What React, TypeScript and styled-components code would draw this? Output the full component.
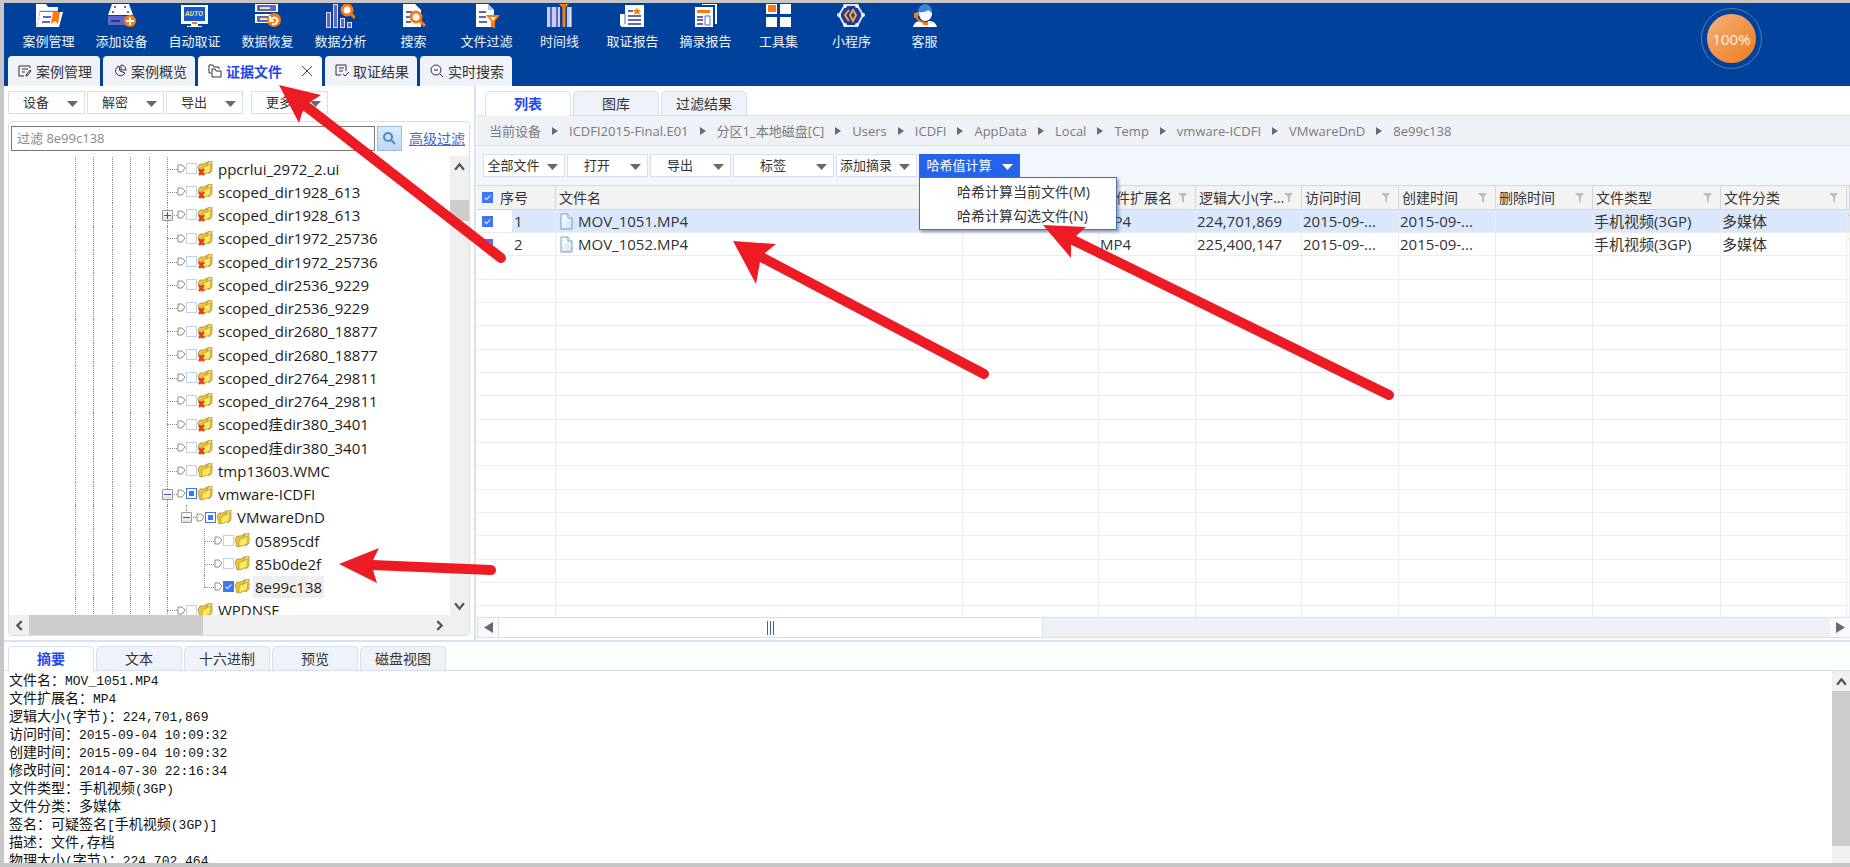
import React from "react";
import styled, { createGlobalStyle, css } from "styled-components";

const UI = `"Open Sans", "Noto Sans CJK SC", sans-serif`;
const LINE = "#d6dff0";
const BLUE = "#00419c";
const ACCENT = "#2563eb";

const GlobalStyle = createGlobalStyle`
  *, *::before, *::after { box-sizing: border-box; }
  html, body { margin: 0; }
  body { font-family: ${UI}; font-size: 13px; color: #333; background: #fff; }
  button, input { font: inherit; color: inherit; }
  ul { list-style: none; margin: 0; padding: 0; }
`;

const Window = styled.div`
  position: relative;
  display: flex;
  flex-direction: column;
  height: 100vh;
  overflow: hidden;
  border: solid #c6c6c6;
  border-width: 3px 0 4px 4px;
`;

/* ---------- header ---------- */

const Header = styled.header`
  position: relative;
  flex: none;
  background: ${BLUE};
`;

const Launcher = styled.nav`
  display: flex;
  height: 53px;
  padding-left: 8px;
`;

const LaunchButton = styled.button`
  display: flex;
  flex-direction: column;
  align-items: center;
  gap: 3px;
  width: 73px;
  padding: 1px 0 0;
  border: 0;
  background: none;
  color: #eef3fb;
  line-height: 20px;
  white-space: nowrap;
`;

const PageTabs = styled.div`
  display: flex;
  gap: 3px;
  height: 30px;
  padding-left: 4px;
`;

const PageTab = styled.button<{ $active?: boolean }>`
  display: flex;
  align-items: center;
  gap: 4px;
  width: ${(p) => (p.$active ? 124 : 92)}px;
  padding: 0 10px;
  border: 0;
  border-radius: 4px 4px 0 0;
  background: ${(p) => (p.$active ? "#fff" : "#eff2f8")};
  color: ${(p) => (p.$active ? "#1f48f0" : "#333")};
  font-size: 14px;
  font-weight: ${(p) => (p.$active ? 700 : 400)};
  white-space: nowrap;
  svg { flex: none; color: #333; }
  svg:last-child:not(:first-child) { margin-left: auto; }
`;

const ProgressBadge = styled.div`
  position: absolute;
  top: 5px;
  right: 88px;
  width: 61px;
  height: 61px;
  padding: 5px;
  border: 1px solid #5f7ba6;
  border-radius: 50%;
  span {
    display: flex;
    align-items: center;
    justify-content: center;
    height: 100%;
    border-radius: 50%;
    background: linear-gradient(135deg, #f6b27a, #ec7a1c);
    color: #fff3e6;
    font-size: 15px;
  }
`;

/* ---------- shared controls ---------- */

const MenuButtonRoot = styled.button<{ $width: number; $open?: boolean }>`
  display: flex;
  align-items: center;
  flex: none;
  width: ${(p) => p.$width}px;
  height: 23px;
  padding: 0 6px 0 0;
  border: 1px solid ${(p) => (p.$open ? ACCENT : LINE)};
  background: ${(p) => (p.$open ? ACCENT : "#fff")};
  color: ${(p) => (p.$open ? "#fff" : "#333")};
  line-height: 20px;
  white-space: nowrap;
  span { flex: 1; padding-bottom: 2px; text-align: center; }
  svg { flex: none; margin: 3px 0 0 4px; color: ${(p) => (p.$open ? "#fff" : "#6a6a6a")}; }
`;

function MenuButton({ label, width, open }: { label: string; width: number; open?: boolean }) {
  return (
    <MenuButtonRoot $width={width} $open={open} aria-haspopup="menu" aria-expanded={!!open}>
      <span>{label}</span>
      <svg width="11" height="6" viewBox="0 0 11 6"><path d="M0 0h11L5.500 6z" fill="currentColor" /></svg>
    </MenuButtonRoot>
  );
}

const CardTabs = styled.div<{ $indent: number }>`
  display: flex;
  flex: none;
  gap: 2px;
  height: 25px;
  padding-left: ${(p) => p.$indent}px;
  border-bottom: 1px solid ${LINE};
`;

const CardTab = styled.button<{ $active?: boolean }>`
  width: 86px;
  height: ${(p) => (p.$active ? 25 : 24)}px;
  padding: 0;
  border: 1px solid ${LINE};
  border-bottom: 0;
  border-radius: 5px 5px 0 0;
  background: ${(p) => (p.$active ? "#fff" : "#eff2f8")};
  color: ${(p) => (p.$active ? "#1f48f0" : "#333")};
  font-size: 14px;
  font-weight: ${(p) => (p.$active ? 700 : 400)};
  line-height: 20px;
`;

const tick = css`
  background: #3f76f5;
  border-color: #3f76f5;
  &::after {
    content: "";
    position: absolute;
    left: 3px;
    top: 1px;
    width: 3px;
    height: 6px;
    border: solid #fff;
    border-width: 0 1px 1px 0;
    transform: rotate(45deg);
  }
`;

const partial = css`
  border-color: #3f76f5;
  border-width: 1px;
  box-shadow: inset 0 0 0 2px #fff, inset 0 0 0 6px #3f76f5;
`;

const Check = styled.input<{ $partial?: boolean }>`
  appearance: none;
  position: relative;
  flex: none;
  width: 11px;
  height: 11px;
  margin: 0;
  border: 1px solid #bcd0f8;
  background: #fff;
  &:checked { ${tick} }
  ${(p) => p.$partial && partial}
`;

/* ---------- left panel ---------- */

const Main = styled.main`
  display: flex;
  flex: 1;
  min-height: 0;
  border-bottom: 2px solid #d7e2f5;
`;

const Side = styled.aside`
  display: flex;
  flex-direction: column;
  flex: none;
  width: 472px;
  padding: 5px 4px 4px;
  border-right: 2px solid #d7e2f5;
`;

const SideTools = styled.div`
  display: flex;
  gap: 2px;
  margin-bottom: 7px;
  > :last-child { margin-left: 6px; }
`;

const TreeBox = styled.section`
  display: flex;
  flex-direction: column;
  flex: 1;
  min-height: 0;
  border: 1px solid ${LINE};
  border-radius: 4px;
`;

const FilterRow = styled.form`
  display: flex;
  align-items: center;
  gap: 2px;
  padding: 4px 4px 5px 2px;
  a { margin-left: 5px; font-size: 14px; line-height: 20px; color: #3a6ad8; white-space: nowrap; }
`;

const FilterInput = styled.input`
  flex: 1;
  min-width: 0;
  height: 25px;
  padding: 0 5px 2px;
  border: 1px solid #777;
  background: #fff;
  color: #333;
  &::placeholder { color: #888; opacity: 1; }
`;

const SearchButton = styled.button`
  display: flex;
  align-items: center;
  justify-content: center;
  width: 25px;
  height: 25px;
  padding: 0;
  border: 1px solid #9dbce2;
  background: linear-gradient(#dceafc, #bfd8f7);
`;

const TreeScroll = styled.div`
  display: flex;
  flex: 1;
  min-height: 0;
`;

const Tree = styled.ul`
  flex: 1;
  min-width: 0;
  overflow: hidden;
  padding: 1px 0 0 66px;
`;

const TreeRow = styled.li`
  display: flex;
  align-items: center;
  height: 23px;
  font-size: 15px;
  line-height: 22px;
  color: #1c1c1c;
  white-space: nowrap;
  &:nth-child(4n) { height: 24px; }
`;

const Guide = styled.span<{ $line?: boolean }>`
  flex: none;
  align-self: stretch;
  width: 18px;
  border-left: 1px ${(p) => (p.$line === false ? "none" : "dotted")} #8c8c8c;
  &:nth-child(even) { width: 19px; }
`;

const Branch = styled.span<{ $last?: boolean }>`
  position: relative;
  flex: none;
  align-self: stretch;
  width: 10px;
  &::before {
    content: "";
    position: absolute;
    left: 0;
    top: 0;
    height: ${(p) => (p.$last ? "50%" : "100%")};
    border-left: 1px dotted #8c8c8c;
  }
  &::after {
    content: "";
    position: absolute;
    left: 0;
    right: 0;
    top: 50%;
    border-top: 1px dotted #8c8c8c;
  }
`;

const Expander = styled.button`
  position: absolute;
  z-index: 1;
  left: -5px;
  top: calc(50% - 5px);
  width: 11px;
  height: 11px;
  padding: 0;
  border: 1px solid #999;
  border-radius: 1px;
  background: linear-gradient(#fff, #e2e2e2);
  svg { display: block; }
`;

const NodeLabel = styled.label<{ $selected?: boolean }>`
  margin-left: 3px;
  padding: 0 2px;
  background: ${(p) => (p.$selected ? "#efefef" : "none")};
`;

const VBar = styled.div<{ $width: number }>`
  display: flex;
  flex-direction: column;
  align-items: center;
  flex: none;
  width: ${(p) => p.$width}px;
  background: #f0f0f0;
`;

const HBar = styled.div`
  display: flex;
  flex: none;
  align-items: center;
  height: 20px;
  background: #f0f0f0;
`;

const BarButton = styled.button`
  display: flex;
  align-items: center;
  justify-content: center;
  flex: none;
  width: 20px;
  height: 20px;
  padding: 0;
  border: 0;
  background: none;
  color: #555;
`;

const Thumb = styled.div<{ $w?: number; $h?: number; $offset?: number }>`
  flex: none;
  width: ${(p) => (p.$w ? p.$w + "px" : "100%")};
  height: ${(p) => (p.$h ? p.$h + "px" : "100%")};
  margin-top: ${(p) => p.$offset ?? 0}px;
  background: #cdcdcd;
`;

const Spacer = styled.span`
  flex: 1;
`;

/* ---------- right panel ---------- */

const Content = styled.section`
  display: flex;
  flex-direction: column;
  flex: 1;
  min-width: 0;
  margin-left: 1px;
  padding-top: 5px;
`;

const Crumbs = styled.nav`
  display: flex;
  align-items: center;
  flex: none;
  gap: 11px;
  height: 30px;
  padding-left: 12px;
  border-bottom: 1px solid ${LINE};
  background: #eef1f6;
  line-height: 20px;
  white-space: nowrap;
  a { color: #7a7a7a; text-decoration: none; }
  svg { flex: none; }
`;

const ContentTools = styled.div`
  display: flex;
  flex: none;
  gap: 2px;
  height: 39px;
  padding: 8px 6px;
  background: #f3f6fc;
`;

const MenuAnchor = styled.div`
  position: relative;
`;

const Menu = styled.ul`
  position: absolute;
  z-index: 3;
  top: 23px;
  left: 0;
  width: 198px;
  padding: 2px 0 1px;
  border: 1px solid #4a70b5;
  background: #fff;
  box-shadow: 2px 2px 3px rgba(60, 80, 130, 0.5);
`;

const MenuItem = styled.button`
  display: block;
  width: 100%;
  height: 24px;
  padding: 0 0 0 37px;
  border: 0;
  background: none;
  font-size: 14px;
  line-height: 24px;
  text-align: left;
  white-space: nowrap;
`;

const TableScroll = styled.div`
  flex: 1;
  min-height: 0;
  overflow: hidden;
`;

const Table = styled.table`
  width: 100%;
  table-layout: fixed;
  border-spacing: 0;
  line-height: 20px;
`;

const Th = styled.th`
  height: 25px;
  padding: 0 8px 0 3px;
  border: solid #d3d6de;
  border-width: 1px 1px 1px 0;
  background: #f3f3f3;
  font-size: 14px;
  font-weight: 400;
  text-align: left;
  white-space: nowrap;
  overflow: hidden;
  &:first-child { padding-left: 5px; }
  > div { display: flex; align-items: center; justify-content: space-between; height: 23px; }
`;

const Row = styled.tr<{ $selected?: boolean }>`
  height: 23px;
  &:nth-child(3n) { height: 24px; }
  td {
    padding: 0 1px;
    border: solid #ededf0;
    border-width: 0 1px 1px 0;
    background: ${(p) => (p.$selected ? "#d9e8fd" : "#fff")};
    font-size: 15px;
    white-space: nowrap;
    overflow: hidden;
  }
  td:first-child {
    padding-left: 5px;
    background: ${(p) => (p.$selected ? "linear-gradient(90deg, #fff 35px, #d9e8fd 35px)" : "#fff")};
  }
`;

const IndexCell = styled.div<{ $gap: number }>`
  display: flex;
  align-items: center;
  gap: ${(p) => p.$gap}px;
`;

const FileCell = styled.div`
  display: flex;
  align-items: center;
  gap: 5px;
  padding-left: 3px;
`;

const GridBar = styled.div`
  display: flex;
  flex: none;
  height: 21px;
  margin-bottom: 2px;
  border: solid ${LINE};
  border-width: 1px 0 1px 1px;
  background: #eef1f7;
`;

const GridBarButton = styled(BarButton)`
  height: 19px;
  background: #f7f9fc;
  color: #666;
`;

const GridThumb = styled.div`
  display: flex;
  align-items: center;
  justify-content: center;
  gap: 2px;
  width: 545px;
  border: solid ${LINE};
  border-width: 0 1px;
  background: #fff;
  i { width: 1px; height: 14px; background: #2f66a8; }
`;

/* ---------- bottom panel ---------- */

const Details = styled.section`
  display: flex;
  flex-direction: column;
  flex: none;
  height: 221px;
  padding-top: 4px;
`;

const DetailBody = styled.div`
  display: flex;
  flex: 1;
  min-height: 0;
`;

const DetailText = styled.div`
  flex: 1;
  overflow: hidden;
  padding-left: 5px;
  color: #111;
  p { margin: 0; height: 18px; line-height: 18px; font-size: 14px; white-space: nowrap; }
`;

const Mono = styled.span`
  font-family: "Liberation Mono", monospace;
  font-size: 13px;
  white-space: pre;
`;

const Annotations = styled.svg`
  position: absolute;
  z-index: 5;
  top: -3px;
  left: -4px;
  pointer-events: none;
`;

/* ---------- drawings ---------- */

const W = "#fff";
const P = "#5c66c9";
const O = "#fb7a0c";

const launchers: { label: string; art: React.ReactNode }[] = [
  {
    label: "案例管理",
    art: (
      <>
        <path d="M2 0h10l2 3h10v4H6L3 23H2z" fill={W} />
        <path d="M6 8h23l-4 15H3z" fill={W} />
        <path d="M5 7h19" stroke="#c4c9ee" />
        <path d="M9 13h8M8 18h8" stroke={P} strokeWidth="2" />
        <path d="M19 8h7l-2 12-3-3-4 3z" fill={O} />
      </>
    ),
  },
  {
    label: "添加设备",
    art: (
      <>
        <path d="M5 0h17l4 11H1z" fill={W} />
        <path d="M7 3h2M17 3h2M5 8h2M20 8h2" stroke={P} strokeWidth="2" />
        <path d="M1 12h25v9H1z" fill={P} />
        <path d="M4 17h9" stroke="#2b3590" strokeWidth="2" />
        <circle cx="23" cy="17" r="6" fill={O} />
        <path d="M19 17h8M23 13v8" stroke={W} strokeWidth="2" />
      </>
    ),
  },
  {
    label: "自动取证",
    art: (
      <>
        <path d="M1 1h27v19H1z" fill={W} />
        <path d="M4 3h21v14H4z" fill="#1657d8" />
        <text x="14" y="12" textAnchor="middle" fontSize="7" fontWeight="700" fontStyle="italic" fill="#e8e23a">AUTO</text>
        <path d="M12 18h5v2h-5z" fill={O} />
        <path d="M11 20h7v2h4v1H7v-1h4z" fill={W} />
      </>
    ),
  },
  {
    label: "数据恢复",
    art: (
      <>
        <path d="M2 0h23v8H2zM2 10h23v9H2z" fill={W} />
        <path d="M4 1h19v6H4zM4 12h19v6H4z" fill={P} />
        <path d="M7 4h10M7 15h8" stroke="#f3ea8b" strokeWidth="2" />
        <circle cx="21" cy="16" r="7" fill={O} />
        <path d="M19 20c5 1 7-4 4-6-2-1-4 0-5 2m-1-4v5h4" fill="none" stroke={W} strokeWidth="2" />
      </>
    ),
  },
  {
    label: "数据分析",
    art: (
      <>
        <path d="M0 8h5v16H0zM7 0h5v24H7zM14 14h5v10h-5zM21 18h5v6h-5z" fill="#dfe1fa" />
        <path d="M1 9h3v14H1zM8 1h3v22H8zM15 15h3v8h-3zM22 19h3v4h-3z" fill={P} />
        <circle cx="21" cy="6" r="5" fill={W} stroke={O} strokeWidth="3" />
        <path d="M25 10l4 4" stroke={O} strokeWidth="3" />
      </>
    ),
  },
  {
    label: "搜索",
    art: (
      <>
        <path d="M4 0h12l6 6v17H4z" fill={W} />
        <path d="M7 8h6M7 13h5M7 18h5" stroke={P} strokeWidth="2" />
        <circle cx="17" cy="13" r="5" fill={W} stroke={O} strokeWidth="3" />
        <path d="M21 17l5 5" stroke={O} strokeWidth="3" />
      </>
    ),
  },
  {
    label: "文件过滤",
    art: (
      <>
        <path d="M4 0h12l6 6v17H4z" fill={W} />
        <path d="M16 0v6h6" fill="#b9bfee" />
        <path d="M7 8h7M7 13h7M7 18h8" stroke={P} strokeWidth="2" />
        <path d="M16 12h10l-4 5v6l-2-1v-5z" fill={W} stroke={O} strokeWidth="2" />
      </>
    ),
  },
  {
    label: "时间线",
    art: (
      <>
        <path d="M2 3h3v20H2zM7 3h4v20H7zM13 3h2v20h-2zM22 3h4v20h-4z" fill="#c9cdf3" />
        <path d="M5 3h2v20H5zM11 3h2v20h-2z" fill="#5c66c9" />
        <path d="M26 3v20" stroke={W} />
        <path d="M14 0h10l-5 5z" fill={O} />
        <path d="M19 4v19" stroke={O} strokeWidth="3" />
      </>
    ),
  },
  {
    label: "取证报告",
    art: (
      <>
        <path d="M7 1h19v22H5c-2 0-3-1-3-3V10h5z" fill={W} />
        <path d="M7 10v10" stroke={P} />
        <path d="M10 7h5M10 12h13M10 16h13M10 20h13" stroke={P} strokeWidth="2" />
        <path d="M19 3l1 3h3l-2 2 1 3-3-2-3 2 1-3-2-2h3z" fill={O} />
      </>
    ),
  },
  {
    label: "摘录报告",
    art: (
      <>
        <path d="M11 0h14v20" fill="none" stroke={W} strokeWidth="2" />
        <path d="M4 3h18v20H4z" fill={W} />
        <path d="M6 6h13v3H6z" fill={O} />
        <path d="M6 13h6M6 16h6M6 20h6" stroke={P} strokeWidth="2" />
        <path d="M14 12h5v9h-5z" fill="none" stroke={P} />
      </>
    ),
  },
  {
    label: "工具集",
    art: (
      <>
        <path d="M2 0h11v10H2zM16 0h11v10H16zM2 13h11v10H2zM16 13h11v10H16z" fill={W} />
        <path d="M4 1h8v7H4z" fill={O} />
      </>
    ),
  },
  {
    label: "小程序",
    art: (
      <>
        <path d="M8 1h12l6 10-6 11H8L2 11z" fill="#2733a8" stroke="#cfeaf6" strokeWidth="2" />
        <g fill="#e9fbff">
          <circle cx="8" cy="2" r="2" /><circle cx="20" cy="2" r="2" /><circle cx="8" cy="21" r="2" />
          <circle cx="20" cy="21" r="2" /><circle cx="2" cy="11" r="2" /><circle cx="26" cy="11" r="2" />
        </g>
        <path d="M12 6l-4 5 4 6M16 6l-3 5 3 6 3-6z" fill="none" stroke="#f0b020" strokeWidth="2" />
      </>
    ),
  },
  {
    label: "客服",
    art: (
      <>
        <path d="M8 8a7 8 0 0 1 14 0v4H8z" fill="#3f83d6" />
        <path d="M9 8c5 1 8-1 9-2l4 3c0 5-3 8-7 8s-6-4-6-9z" fill={W} />
        <path d="M3 23c1-4 4-6 8-6l4 2 4-2c4 0 7 2 8 6z" fill={W} />
        <path d="M7 8v6c1 3 4 4 8 5" fill="none" stroke={O} strokeWidth="2" />
        <path d="M4 9h4v5H4zM13 18h5v3h-5z" fill={O} />
      </>
    ),
  },
];

const TabArt = ({ children }: { children: React.ReactNode }) => (
  <svg width="14" height="14" viewBox="0 0 14 14" fill="none" stroke="currentColor">{children}</svg>
);

const pageTabs = [
  { label: "案例管理", art: <><path d="M12 4V2H1v10h5M4 5h6M4 8h3" /><path d="M8 11l4-5 1 1-4 5H8z" /></> },
  { label: "案例概览", art: <><path d="M6 2a5 5 0 1 0 6 7L7 7z" /><path d="M8 1v5h5a5 5 0 0 0-5-5z" /></> },
  { label: "证据文件", active: true, art: <><path d="M3 9H1V1h4l1 2h5v2" /><path d="M4 13V5h3l1 2h5v6z" /></> },
  { label: "取证结果", art: <><path d="M11 7V1H1v10h5M4 4h5M4 7h4" /><path d="M8 10l2 2 4-4" /></> },
  { label: "实时搜索", art: <><circle cx="6" cy="6" r="5" /><path d="M4 6h4M10 10l3 3" /></> },
];

function Chevron({ dir }: { dir: "up" | "down" | "left" | "right" }) {
  const d = { up: "M1 8l4-5 4 5", down: "M1 3l4 5 4-5", left: "M7 1L3 5l4 4", right: "M3 1l4 4-4 4" }[dir];
  return (
    <svg width="11" height="11" viewBox="0 0 10 10">
      <path d={d} fill="none" stroke="currentColor" strokeWidth="2" />
    </svg>
  );
}

function Triangle({ dir, size = 8 }: { dir: "left" | "right"; size?: number }) {
  return (
    <svg width={size - 2} height={size} viewBox="0 0 6 10" preserveAspectRatio="none">
      <path d={dir === "right" ? "M0 0l6 5-6 5z" : "M6 0L0 5l6 5z"} fill="#666a72" />
    </svg>
  );
}

const TreeIcon = styled.svg`
  flex: none;
`;

function FolderArt({ deleted }: { deleted?: boolean }) {
  return (
    <TreeIcon width="16" height="15" viewBox="0 0 16 15">
      <path d="M9 3l2-1V0l4 0v10l-3 3z" fill="#f0d77a" stroke="#a98522" strokeWidth=".7" />
      <path d="M1 6l2-3 2 0 2 0 3-2v11l-7 2z" fill="#e9c63e" stroke="#a98522" strokeWidth=".7" />
      <path d="M5 7l9-4-1 8-8 3z" fill="#ffe95c" stroke="#b8932a" strokeWidth=".7" />
      {deleted && <path d="M2 8l5 6M7 8l-5 6" stroke="#e0401c" strokeWidth="2.400" />}
    </TreeIcon>
  );
}

const TagArt = () => (
  <TreeIcon width="9" height="9" viewBox="0 0 9 9">
    <path d="M1 1h4l3 3-3 4H1z" fill="#fff" stroke="#8a8a8a" />
  </TreeIcon>
);

const FileArt = () => (
  <svg width="13" height="17" viewBox="0 0 13 17">
    <defs>
      <linearGradient id="sheet" x1="0" y1="0" x2="1" y2="1">
        <stop offset="0" stopColor="#fff" />
        <stop offset="1" stopColor="#cfe3f6" />
      </linearGradient>
    </defs>
    <path d="M1 1h7l4 4v11H1z" fill="url(#sheet)" stroke="#7f9cba" />
    <path d="M8 1v4h4" fill="#fff" stroke="#7f9cba" />
  </svg>
);

const FunnelArt = () => (
  <svg width="9" height="10" viewBox="0 0 9 10">
    <path d="M0 0h9L6 4v6L4 8V4z" fill="#bdbdbd" />
  </svg>
);

/* ---------- data ---------- */

interface TreeNode {
  name: string;
  deleted?: boolean;
  depth?: number;
  expander?: "+" | "-";
  state?: "checked" | "partial";
  last?: boolean;
}

const nodes: TreeNode[] = [
  { name: "ppcrlui_2972_2.ui", deleted: true },
  { name: "scoped_dir1928_613", deleted: true },
  { name: "scoped_dir1928_613", deleted: true, expander: "+" },
  { name: "scoped_dir1972_25736", deleted: true },
  { name: "scoped_dir1972_25736", deleted: true },
  { name: "scoped_dir2536_9229", deleted: true },
  { name: "scoped_dir2536_9229", deleted: true },
  { name: "scoped_dir2680_18877", deleted: true },
  { name: "scoped_dir2680_18877", deleted: true },
  { name: "scoped_dir2764_29811", deleted: true },
  { name: "scoped_dir2764_29811", deleted: true },
  { name: "scoped\u3f8fdir380_3401", deleted: true },
  { name: "scoped\u3f8fdir380_3401", deleted: true },
  { name: "tmp13603.WMC" },
  { name: "vmware-ICDFI", expander: "-", state: "partial" },
  { name: "VMwareDnD", depth: 1, expander: "-", state: "partial", last: true },
  { name: "05895cdf", depth: 2 },
  { name: "85b0de2f", depth: 2 },
  { name: "8e99c138", depth: 2, state: "checked", last: true },
  { name: "WPDNSE" },
];

const crumbs = [
  "当前设备", "ICDFI2015-Final.E01", "分区1_本地磁盘[C]", "Users", "ICDFI",
  "AppData", "Local", "Temp", "vmware-ICDFI", "VMwareDnD", "8e99c138",
];

const columns: { title: string; width?: number; filter?: boolean }[] = [
  { title: "序号", width: 79 },
  { title: "文件名", width: 407 },
  { title: "", width: 136 },
  { title: "文件扩展名", width: 97, filter: true },
  { title: "逻辑大小(字...", width: 106, filter: true },
  { title: "访问时间", width: 97, filter: true },
  { title: "创建时间", width: 97, filter: true },
  { title: "删除时间", width: 97, filter: true },
  { title: "文件类型", width: 128, filter: true },
  { title: "文件分类", width: 126, filter: true },
  { title: "" },
];

const files = [
  ["MOV_1051.MP4", "", "MP4", "224,701,869", "2015-09-...", "2015-09-...", "", "手机视频(3GP)", "多媒体", "可"],
  ["MOV_1052.MP4", "", "MP4", "225,400,147", "2015-09-...", "2015-09-...", "", "手机视频(3GP)", "多媒体", "可"],
];

const details: [string, string][] = [
  ["文件名", "MOV_1051.MP4"],
  ["文件扩展名", "MP4"],
  ["逻辑大小(字节)", "224,701,869"],
  ["访问时间", "2015-09-04 10:09:32"],
  ["创建时间", "2015-09-04 10:09:32"],
  ["修改时间", "2014-07-30 22:16:34"],
  ["文件类型", "手机视频(3GP)"],
  ["文件分类", "多媒体"],
  ["签名", "可疑签名[手机视频(3GP)]"],
  ["描述", "文件,存档"],
  ["物理大小(字节)", "224,702,464"],
];

function TreeItem({ node, index }: { node: TreeNode; index: number }) {
  const id = `node-${index}`;
  return (
    <TreeRow>
      <Guide /><Guide /><Guide /><Guide /><Guide />
      {node.depth ? <Guide /> : null}
      {node.depth === 2 && <Guide $line={false} />}
      <Branch $last={node.last}>
        {node.expander && (
          <Expander aria-label={node.expander === "+" ? "展开" : "收起"}>
            <svg width="9" height="9" viewBox="0 0 9 9">
              <path d={node.expander === "+" ? "M1 4h7v1H1zM4 1h1v7H4z" : "M1 4h7v1H1z"} fill="#3a56a8" />
            </svg>
          </Expander>
        )}
      </Branch>
      <TagArt />
      <Check type="checkbox" id={id} defaultChecked={node.state === "checked"} $partial={node.state === "partial"} />
      <FolderArt deleted={node.deleted} />
      <NodeLabel htmlFor={id} $selected={node.state === "checked"}>{node.name}</NodeLabel>
    </TreeRow>
  );
}

function DetailLine({ name, value }: { name: string; value: string }) {
  return (
    <p>
      {`${name}\uff1a${value}`.split(/([\x20-\x7e]+)/).map((part, i) => (i % 2 ? <Mono key={i}>{part}</Mono> : part))}
    </p>
  );
}

export default function App() {
  return (
    <>
      <GlobalStyle />
      <Window>
        <Header>
          <Launcher>
            {launchers.map((item) => (
              <LaunchButton key={item.label}>
                <svg width="29" height="24" viewBox="0 0 29 24">{item.art}</svg>
                {item.label}
              </LaunchButton>
            ))}
          </Launcher>
          <PageTabs role="tablist">
            {pageTabs.map((tab) => (
              <PageTab key={tab.label} role="tab" aria-selected={!!tab.active} $active={tab.active}>
                <TabArt>{tab.art}</TabArt>
                {tab.label}
                {tab.active && (
                  <svg width="10" height="10" viewBox="0 0 10 10"><path d="M0 0l10 10M10 0L0 10" stroke="#444" /></svg>
                )}
              </PageTab>
            ))}
          </PageTabs>
          <ProgressBadge><span>100%</span></ProgressBadge>
        </Header>

        <Main>
          <Side>
            <SideTools>
              {["设备", "解密", "导出", "更多"].map((label) => <MenuButton key={label} label={label} width={77} />)}
            </SideTools>
            <TreeBox>
              <FilterRow onSubmit={(e) => e.preventDefault()}>
                <FilterInput aria-label="过滤" placeholder="过滤 8e99c138" />
                <SearchButton aria-label="搜索">
                  <svg width="13" height="13" viewBox="0 0 13 13" fill="none" stroke="#4f86c6" strokeWidth="2">
                    <circle cx="5" cy="5" r="4" /><path d="M8 8l4 4" />
                  </svg>
                </SearchButton>
                <a href="#filter">高级过滤</a>
              </FilterRow>
              <TreeScroll>
                <Tree>
                  {nodes.map((node, i) => <TreeItem key={i} node={node} index={i} />)}
                </Tree>
                <VBar $width={19}>
                  <BarButton aria-label="向上"><Chevron dir="up" /></BarButton>
                  <Thumb $h={21} $offset={24} />
                  <Spacer />
                  <BarButton aria-label="向下"><Chevron dir="down" /></BarButton>
                </VBar>
              </TreeScroll>
              <HBar>
                <BarButton aria-label="向左"><Chevron dir="left" /></BarButton>
                <Thumb $w={174} />
                <Spacer />
                <BarButton aria-label="向右"><Chevron dir="right" /></BarButton>
                <VBar $width={20} />
              </HBar>
            </TreeBox>
          </Side>

          <Content>
            <CardTabs $indent={8} role="tablist">
              <CardTab $active role="tab">列表</CardTab>
              <CardTab role="tab">图库</CardTab>
              <CardTab role="tab">过滤结果</CardTab>
            </CardTabs>
            <Crumbs aria-label="路径">
              {crumbs.map((c, i) => (
                <React.Fragment key={i}>
                  {i > 0 && <Triangle dir="right" />}
                  <a href="#path">{c}</a>
                </React.Fragment>
              ))}
            </Crumbs>
            <ContentTools>
              <MenuButton label="全部文件" width={82} />
              <MenuButton label="打开" width={81} />
              <MenuButton label="导出" width={81} />
              <MenuButton label="标签" width={101} />
              <MenuButton label="添加摘录" width={81} />
              <MenuAnchor>
                <MenuButton label="哈希值计算" width={101} open />
                <Menu role="menu">
                  <li><MenuItem role="menuitem">哈希计算当前文件(M)</MenuItem></li>
                  <li><MenuItem role="menuitem">哈希计算勾选文件(N)</MenuItem></li>
                </Menu>
              </MenuAnchor>
            </ContentTools>
            <TableScroll>
              <Table>
                <colgroup>
                  {columns.map((c, i) => <col key={i} width={c.width} />)}
                </colgroup>
                <thead>
                  <tr>
                    {columns.map((c, i) => (
                      <Th key={i} scope="col">
                        <div>
                          {i === 0 ? (
                            <IndexCell $gap={7}>
                              <Check type="checkbox" aria-label="全选" defaultChecked />
                              {c.title}
                            </IndexCell>
                          ) : c.title}
                          {c.filter && <FunnelArt />}
                        </div>
                      </Th>
                    ))}
                  </tr>
                </thead>
                <tbody>
                  {files.map((cells, i) => (
                    <Row key={i} $selected={i === 0}>
                      <td>
                        <IndexCell $gap={21}>
                          <Check type="checkbox" aria-label={cells[0]} defaultChecked />
                          {i + 1}
                        </IndexCell>
                      </td>
                      {cells.map((cell, j) => (
                        <td key={j}>{j === 0 ? <FileCell><FileArt />{cell}</FileCell> : cell}</td>
                      ))}
                    </Row>
                  ))}
                  {Array.from({ length: 16 }, (_, i) => (
                    <Row key={`blank-${i}`}>
                      {columns.map((_c, j) => <td key={j} />)}
                    </Row>
                  ))}
                </tbody>
              </Table>
            </TableScroll>
            <GridBar>
              <GridBarButton aria-label="向左"><Triangle dir="left" size={11} /></GridBarButton>
              <GridThumb><i /><i /><i /></GridThumb>
              <Spacer />
              <GridBarButton aria-label="向右"><Triangle dir="right" size={11} /></GridBarButton>
            </GridBar>
          </Content>
        </Main>

        <Details>
          <CardTabs $indent={4} role="tablist">
            {["摘要", "文本", "十六进制", "预览", "磁盘视图"].map((label, i) => (
              <CardTab key={label} role="tab" $active={i === 0}>{label}</CardTab>
            ))}
          </CardTabs>
          <DetailBody>
            <DetailText>
              {details.map(([name, value]) => <DetailLine key={name} name={name} value={value} />)}
            </DetailText>
            <VBar $width={18}>
              <BarButton aria-label="向上"><Chevron dir="up" /></BarButton>
              <Thumb $h={155} />
            </VBar>
          </DetailBody>
        </Details>

        <Annotations width="1850" height="867" viewBox="0 0 1850 867" fill="#ed1c24" stroke="#ed1c24" aria-hidden="true">
          <path d="M279 85l42 10-11 7-8 11-3 10z" stroke="none" />
          <path d="M307 107L501 258" strokeWidth="10" strokeLinecap="round" />
          <path d="M733 241l43 3-11 9-5 9-4 22z" stroke="none" />
          <path d="M763 258L984 374" strokeWidth="10" strokeLinecap="round" />
          <path d="M1043 225l43 2-10 9-5 9 0 13z" stroke="none" />
          <path d="M1073 240L1389 395" strokeWidth="10" strokeLinecap="round" />
          <path d="M339 564l40-16-6 12 0 10 4 13z" stroke="none" />
          <path d="M372 565L491 570" strokeWidth="10" strokeLinecap="round" />
        </Annotations>
      </Window>
    </>
  );
}
